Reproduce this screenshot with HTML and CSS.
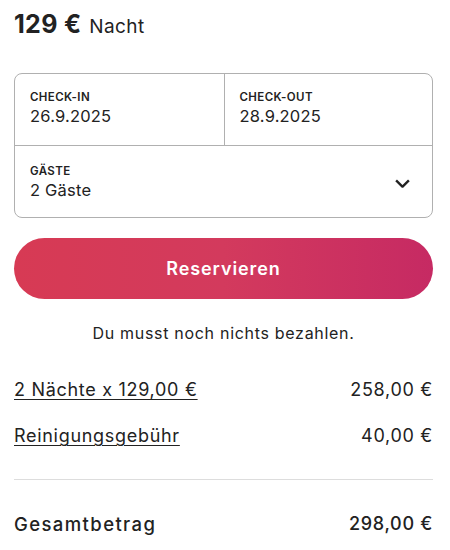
FILE: index.html
```html
<!DOCTYPE html>
<html lang="de">
<head>
<meta charset="utf-8">
<link rel="stylesheet" href="styles.css">
</head>
<body>
<div class="card">
  <div class="price"><span class="amount">129 €</span><span class="unit">Nacht</span></div>
  <div class="picker">
    <div class="dates">
      <div class="cell">
        <div class="label">CHECK-IN</div>
        <div class="value">26.9.2025</div>
      </div>
      <div class="cell cell-right">
        <div class="label">CHECK-OUT</div>
        <div class="value">28.9.2025</div>
      </div>
    </div>
    <div class="cell guests">
      <div>
        <div class="label">GÄSTE</div>
        <div class="value">2 Gäste</div>
      </div>
      <svg class="chev" width="17" height="17" viewBox="0 0 32 32" fill="none" stroke="#222" stroke-width="4.5" aria-hidden="true"><path d="M28 12 16.7 23.3a1 1 0 0 1-1.4 0L4 12"/></svg>
    </div>
  </div>
  <button class="reserve">Reservieren</button>
  <p class="note">Du musst noch nichts bezahlen.</p>
  <div class="rows">
    <div class="row"><span class="link">2 Nächte x 129,00 €</span><span>258,00 €</span></div>
    <div class="row"><span class="link">Reinigungsgebühr</span><span>40,00 €</span></div>
  </div>
  <div class="total"><span>Gesamtbetrag</span><span>298,00 €</span></div>
</div>
</body>
</html>
```

FILE: styles.css
```css
* { box-sizing: border-box; }
body {
  margin: 0;
  background: #fff;
  color: #222;
  font-family: Inter, "Liberation Sans", sans-serif;
}
.card {
  padding: 7px 17px 0 14px;
}
.price {
  display: flex;
  align-items: baseline;
  gap: 8px;
  height: 37px;
}
.amount {
  font-size: 25px;
  line-height: 34px;
  font-weight: 700;
  letter-spacing: 0.3px;
}
.unit {
  font-size: 19px;
  letter-spacing: 0.4px;
}
.picker {
  margin-top: 29px;
  border: 1px solid #b0b0b0;
  border-radius: 8px;
  overflow: hidden;
}
.dates {
  display: grid;
  grid-template-columns: 1fr 1fr;
  border-bottom: 1px solid #b0b0b0;
}
.cell {
  height: 71px;
  padding: 15px 15px 0;
}
.cell-right {
  border-left: 1px solid #b0b0b0;
}
.label {
  font-size: 11.5px;
  font-weight: 600;
  line-height: 16px;
  letter-spacing: 0.4px;
}
.value {
  font-size: 16.5px;
  line-height: 22px;
  letter-spacing: 0.2px;
}
.guests {
  display: flex;
  justify-content: space-between;
  align-items: center;
  padding-top: 0;
  padding-right: 21px;
}
.chev { margin-top: 2px; }
.reserve {
  display: block;
  width: 100%;
  height: 61px;
  margin-top: 20px;
  border: none;
  border-radius: 31px;
  background: linear-gradient(to right, #d73a54 0%, #d33a5d 50%, #c62a63 100%);
  color: #fff;
  font-family: inherit;
  font-size: 18px;
  font-weight: 600;
  letter-spacing: 0.9px;
}
.note {
  margin: 22px 0 0;
  text-align: center;
  font-size: 16px;
  line-height: 24px;
  letter-spacing: 0.7px;
}
.rows {
  margin-top: 33px;
  display: flex;
  flex-direction: column;
  gap: 22px;
  padding-bottom: 31px;
  border-bottom: 1px solid #dddddd;
}
.row, .total {
  display: flex;
  justify-content: space-between;
  font-size: 18px;
  line-height: 24px;
  letter-spacing: 0.7px;
}
.link {
  text-decoration: underline;
  text-decoration-thickness: 1px;
  text-underline-offset: 3px;
}
.total {
  margin-top: 32px;
  font-weight: 500;
}
.total span:first-child {
  font-size: 18.5px;
  letter-spacing: 1.4px;
}
```
